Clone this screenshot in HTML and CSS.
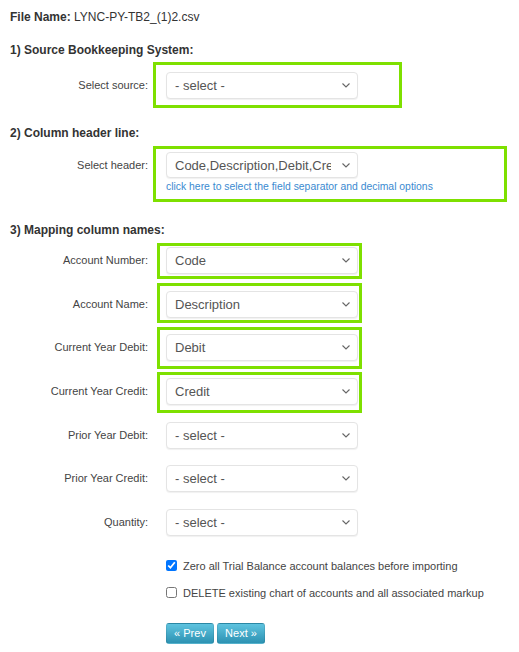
FILE: index.html
```html
<!DOCTYPE html>
<html lang="en">
<head>
<meta charset="utf-8">
<title>Import mapping</title>
<link rel="stylesheet" href="styles.css">
</head>
<body>
<div class="page">
  <p class="filename"><b>File Name:</b> LYNC-PY-TB2_(1)2.csv</p>

  <h3 class="sec sec1">1) Source Bookkeeping System:</h3>
  <div class="row r-source">
    <label class="lbl">Select source:</label>
    <div class="ctl hl hl-source">
      <div class="sel"><span class="val">- select -</span><svg class="chev" width="8" height="5" viewBox="0 0 8 5"><path d="M0.5 0.5 L4 4 L7.5 0.5" fill="none" stroke="#666" stroke-width="1.1"/></svg></div>
    </div>
  </div>

  <h3 class="sec sec2">2) Column header line:</h3>
  <div class="row r-header">
    <label class="lbl lbl-h">Select header:</label>
    <div class="ctl hl hl-header">
      <div class="sel sel-h"><span class="val">Code,Description,Debit,Credit</span><svg class="chev" width="8" height="5" viewBox="0 0 8 5"><path d="M0.5 0.5 L4 4 L7.5 0.5" fill="none" stroke="#666" stroke-width="1.1"/></svg></div>
      <a class="link">click here to select the field separator and decimal options</a>
    </div>
  </div>

  <h3 class="sec sec3">3) Mapping column names:</h3>
  <div class="map">
    <div class="row">
      <label class="lbl">Account Number:</label>
      <div class="ctl hl hl-an">
        <div class="sel"><span class="val">Code</span><svg class="chev" width="8" height="5" viewBox="0 0 8 5"><path d="M0.5 0.5 L4 4 L7.5 0.5" fill="none" stroke="#666" stroke-width="1.1"/></svg></div>
      </div>
    </div>
    <div class="row">
      <label class="lbl">Account Name:</label>
      <div class="ctl hl hl-name">
        <div class="sel"><span class="val">Description</span><svg class="chev" width="8" height="5" viewBox="0 0 8 5"><path d="M0.5 0.5 L4 4 L7.5 0.5" fill="none" stroke="#666" stroke-width="1.1"/></svg></div>
      </div>
    </div>
    <div class="row">
      <label class="lbl">Current Year Debit:</label>
      <div class="ctl hl hl-debit">
        <div class="sel"><span class="val">Debit</span><svg class="chev" width="8" height="5" viewBox="0 0 8 5"><path d="M0.5 0.5 L4 4 L7.5 0.5" fill="none" stroke="#666" stroke-width="1.1"/></svg></div>
      </div>
    </div>
    <div class="row">
      <label class="lbl">Current Year Credit:</label>
      <div class="ctl hl hl-credit">
        <div class="sel"><span class="val">Credit</span><svg class="chev" width="8" height="5" viewBox="0 0 8 5"><path d="M0.5 0.5 L4 4 L7.5 0.5" fill="none" stroke="#666" stroke-width="1.1"/></svg></div>
      </div>
    </div>
    <div class="row">
      <label class="lbl">Prior Year Debit:</label>
      <div class="ctl">
        <div class="sel"><span class="val">- select -</span><svg class="chev" width="8" height="5" viewBox="0 0 8 5"><path d="M0.5 0.5 L4 4 L7.5 0.5" fill="none" stroke="#666" stroke-width="1.1"/></svg></div>
      </div>
    </div>
    <div class="row">
      <label class="lbl">Prior Year Credit:</label>
      <div class="ctl">
        <div class="sel"><span class="val">- select -</span><svg class="chev" width="8" height="5" viewBox="0 0 8 5"><path d="M0.5 0.5 L4 4 L7.5 0.5" fill="none" stroke="#666" stroke-width="1.1"/></svg></div>
      </div>
    </div>
    <div class="row">
      <label class="lbl">Quantity:</label>
      <div class="ctl">
        <div class="sel"><span class="val">- select -</span><svg class="chev" width="8" height="5" viewBox="0 0 8 5"><path d="M0.5 0.5 L4 4 L7.5 0.5" fill="none" stroke="#666" stroke-width="1.1"/></svg></div>
      </div>
    </div>
  </div>

  <div class="checks">
    <label class="chk"><input type="checkbox" checked><span>Zero all Trial Balance account balances before importing</span></label>
    <label class="chk"><input type="checkbox"><span>DELETE existing chart of accounts and all associated markup</span></label>
  </div>

  <div class="buttons">
    <button class="btn">« Prev</button>
    <button class="btn">Next »</button>
  </div>
</div>
</body>
</html>
```

FILE: styles.css
```css
body {
  margin: 0;
  background: #fff;
  color: #333;
  font-family: "Liberation Sans", Arial, sans-serif;
}

.page {
  padding: 10px 0 0 10px;
}

.filename {
  margin: 0;
  font-size: 12px;
  line-height: 14px;
}

.sec {
  margin: 0;
  font-size: 12px;
  line-height: 14px;
  font-weight: bold;
}

.sec1 { margin-top: 19px; }
.sec2 { margin-top: 27px; }
.sec3 { margin-top: 30px; }

.row {
  display: flex;
  align-items: flex-start;
}

.r-source { margin-top: 15px; }
.r-header { margin-top: 12px; }

.lbl {
  width: 138px;
  flex: none;
  text-align: right;
  font-size: 11px;
  line-height: 27px;
  color: #444;
}

.lbl-h { line-height: 26px; }

.ctl {
  position: relative;
  margin-left: 18px;
}

.sel {
  box-sizing: border-box;
  width: 192px;
  height: 27px;
  display: flex;
  align-items: center;
  padding: 0 7px 0 8px;
  background: #fff;
  border: 1px solid #e4e4e4;
  border-radius: 4px;
  box-shadow: 0 1px 1px rgba(0, 0, 0, 0.06);
  font-size: 13px;
  color: #555;
}

.sel-h {
  height: 26px;
}

.sel-h .val {
  margin-right: 11px;
}

.val {
  flex: 1;
  overflow: hidden;
  white-space: nowrap;
}

.chev {
  flex: none;
  display: block;
}

.link {
  display: block;
  margin-top: 2px;
  font-size: 10.4px;
  line-height: 13px;
  color: #3a8ad0;
  white-space: nowrap;
  cursor: pointer;
}

.map {
  margin-top: 10px;
  display: flex;
  flex-direction: column;
  gap: 16.67px;
}

/* green annotation boxes drawn over the form */
.hl::after {
  content: "";
  position: absolute;
  box-sizing: border-box;
  border: 3px solid #7ee000;
  pointer-events: none;
}

.hl-source::after { top: -10px; left: -13px; width: 249px; height: 46px; }
.hl-header::after { top: -6px; left: -13px; width: 354px; height: 56px; }
.hl-an::after     { top: -4px; left: -9px; width: 205px; height: 36px; }
.hl-name::after   { top: -8px; left: -9px; width: 205px; height: 40px; }
.hl-debit::after  { top: -7px; left: -9px; width: 205px; height: 42px; }
.hl-credit::after { top: -6px; left: -9px; width: 205px; height: 41px; }

.checks {
  margin-top: 23px;
  padding-left: 156px;
  display: flex;
  flex-direction: column;
  gap: 13px;
}

.chk {
  display: flex;
  align-items: center;
  height: 14px;
  font-size: 11px;
  line-height: 14px;
  color: #444;
}

.chk input {
  margin: 0 6px 0 0;
  width: 11px;
  height: 11px;
}

.buttons {
  margin-top: 23px;
  padding-left: 156px;
  display: flex;
  gap: 3px;
}

.btn {
  box-sizing: border-box;
  width: 48px;
  height: 21px;
  padding: 0;
  border: 1px solid rgba(0, 0, 0, 0.08);
  border-radius: 3px;
  background: linear-gradient(#5ec3df, #2d92b2);
  color: #fff;
  font-family: "Liberation Sans", Arial, sans-serif;
  font-size: 11px;
  line-height: 19px;
  text-align: center;
}
```
